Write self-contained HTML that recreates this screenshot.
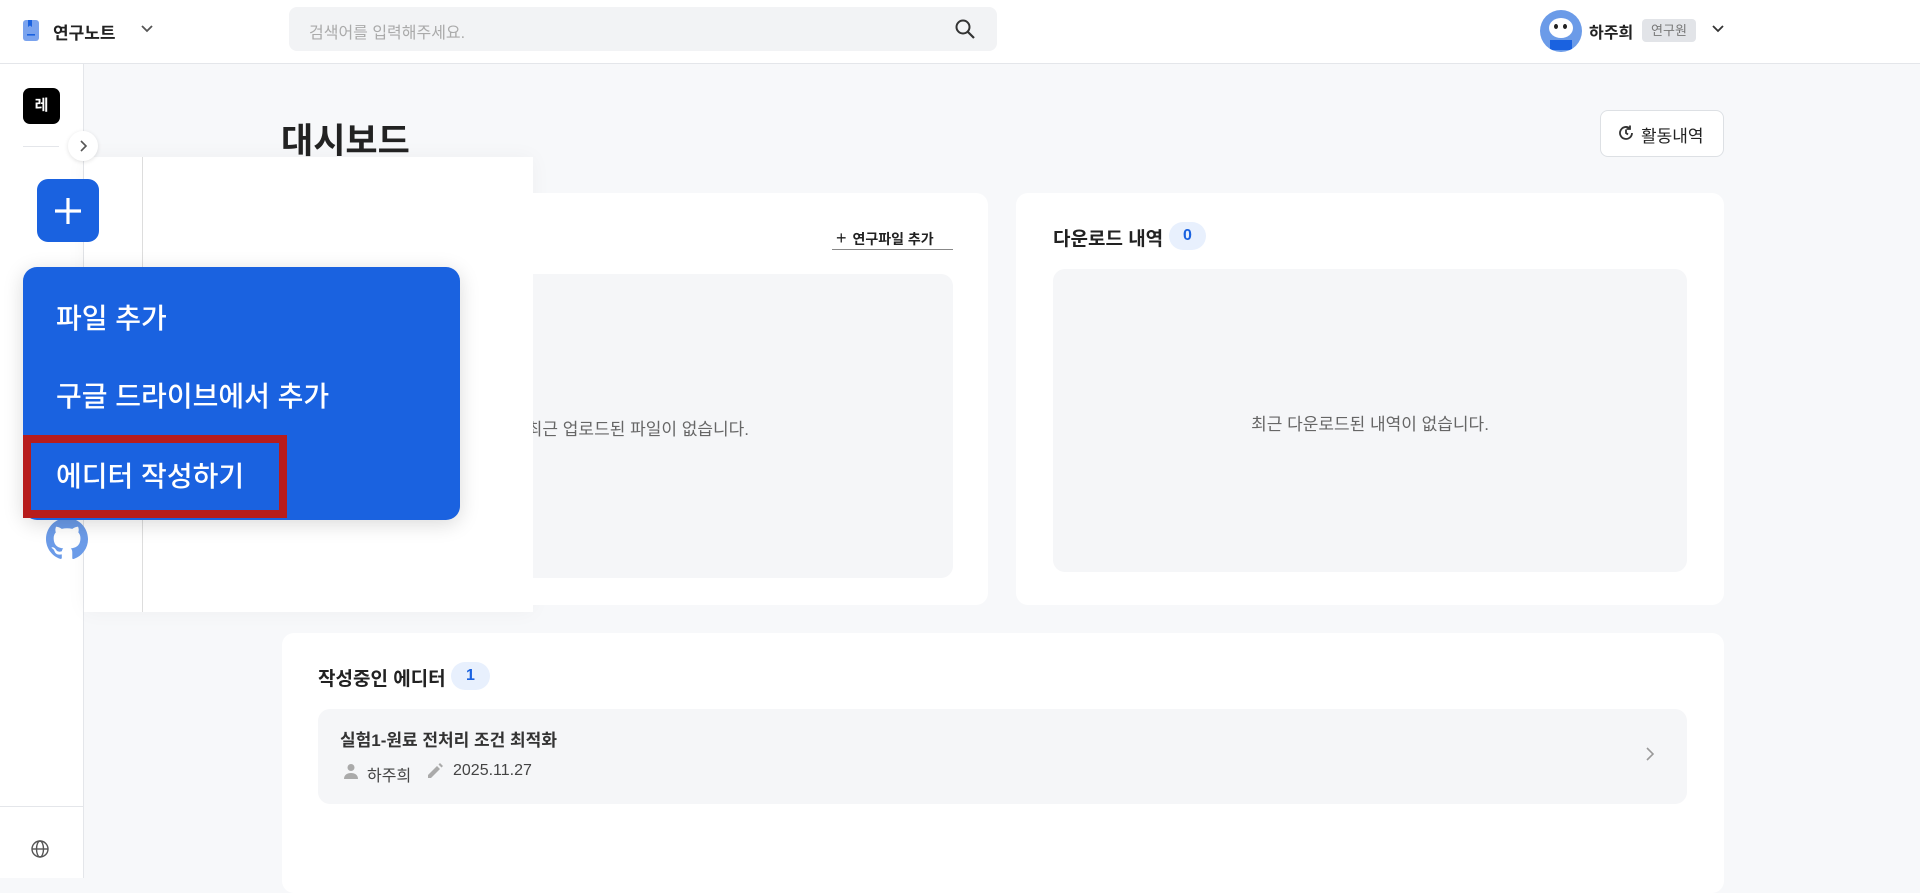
<!DOCTYPE html>
<html><head><meta charset="utf-8"><style>
*{box-sizing:border-box;margin:0;padding:0}
body{width:1920px;height:878px;overflow:hidden;background:#f7f8fa;font-family:"Liberation Sans","Noto Sans CJK KR",sans-serif;color:#222;position:relative}
.a{position:absolute}
.hdr{left:0;top:0;width:1920px;height:64px;background:#fff;border-bottom:1px solid #e4e6ea}
.side{left:0;top:64px;width:84px;height:814px;background:#fff;border-right:1px solid #e4e6ea}
.card{background:#fff;border-radius:12px}
.gray{background:#f5f6f8;border-radius:12px}
.badge{background:#e8f0fd;color:#1a62e0;border-radius:14px;font-weight:700;font-size:16px;text-align:center;height:28px;line-height:28px}
</style></head><body>
<div class="a hdr"></div>
<svg class="a" style="left:23px;top:20px" width="16" height="21" viewBox="0 0 16 21"><rect x="0" y="0" width="16" height="21" rx="3" fill="#7aa3ee"/><path d="M5 0v7l2-1.5L9 7V0z" fill="#1a62e0"/><rect x="4" y="14" width="8" height="1.6" fill="#1a62e0"/></svg>
<div class="a" style="left:53px;top:19px;font-size:17px;font-weight:700">연구노트</div>
<svg class="a" style="left:140px;top:24px" width="14" height="10" viewBox="0 0 14 10"><path d="M2 2l5 5 5-5" stroke="#555" stroke-width="1.8" fill="none"/></svg>
<div class="a" style="left:289px;top:7px;width:708px;height:44px;background:#f2f3f5;border-radius:8px"></div>
<div class="a" style="left:309px;top:19px;font-size:16px;color:#aaa">검색어를 입력해주세요.</div>
<svg class="a" style="left:954px;top:18px" width="22" height="22" viewBox="0 0 22 22"><circle cx="9" cy="9" r="6.5" stroke="#333" stroke-width="2" fill="none"/><path d="M14 14l6 6" stroke="#333" stroke-width="2.2"/></svg>
<div class="a" style="left:1540px;top:10px;width:42px;height:42px;border-radius:50%;background:#6b9be8;overflow:hidden"><div class="a" style="left:9px;top:8px;width:24px;height:20px;border-radius:50%;background:#fff"></div><div class="a" style="left:14px;top:14px;width:4px;height:5px;background:#222;border-radius:50%"></div><div class="a" style="left:23px;top:14px;width:4px;height:5px;background:#222;border-radius:50%"></div><div class="a" style="left:10px;top:30px;width:22px;height:10px;background:#1a62e0"></div></div>
<div class="a" style="left:1589px;top:19px;font-size:16px;font-weight:700">하주희</div>
<div class="a" style="left:1642px;top:19px;width:54px;height:23px;background:#e2e4e8;border-radius:4px;font-size:13px;color:#777;text-align:center;line-height:23px">연구원</div>
<svg class="a" style="left:1711px;top:24px" width="14" height="10" viewBox="0 0 14 10"><path d="M2 2l5 5 5-5" stroke="#333" stroke-width="1.8" fill="none"/></svg>
<div class="a side"></div>
<div class="a" style="left:23px;top:88px;width:37px;height:36px;background:#000;border-radius:7px;color:#fff;font-weight:700;font-size:15px;text-align:center;line-height:36px">레</div>
<div class="a" style="left:23px;top:146px;width:36px;height:1px;background:#e4e6ea"></div>
<div class="a" style="left:84px;top:157px;width:449px;height:455px;background:#fff;box-shadow:0 0 20px rgba(0,0,0,.04)"></div>
<div class="a" style="left:142px;top:157px;width:1px;height:455px;background:#ddd"></div>
<div class="a" style="left:68px;top:131px;width:30px;height:30px;border-radius:50%;background:#fff;box-shadow:0 1px 4px rgba(0,0,0,.12)"></div>
<svg class="a" style="left:78px;top:139px" width="10" height="14" viewBox="0 0 10 14"><path d="M3 2l5 5-5 5" stroke="#555" stroke-width="1.6" fill="none"/></svg>
<div class="a" style="left:37px;top:179px;width:62px;height:63px;background:#1a62e0;border-radius:11px"></div>
<svg class="a" style="left:52px;top:195px" width="32" height="32" viewBox="0 0 32 32"><path d="M16 3v26M3 16h26" stroke="#fff" stroke-width="3.2"/></svg>
<svg class="a" style="left:46px;top:518px" width="42" height="42" viewBox="0 0 16 16"><path fill="#6b9be8" d="M8 0C3.58 0 0 3.58 0 8c0 3.54 2.290 6.53 5.47 7.59.4.07.55-.17.55-.38v-1.34c-2.23.48-2.7-1.07-2.7-1.070-.36-.92-.89-1.17-.89-1.17-.73-.5.06-.49.06-.49.8.06 1.23.83 1.23.83.71 1.22 1.87.87 2.33.66.07-.52.28-.87.51-1.07-1.78-.2-3.64-.89-3.64-3.95 0-.87.31-1.59.82-2.15-.08-.2-.36-1.02.08-2.12 0 0 .67-.21 2.2.82a7.6 7.6 0 014 0c1.53-1.04 2.2-.82 2.2-.82.44 1.1.16 1.92.08 2.12.51.56.82 1.27.82 2.15 0 3.07-1.87 3.75-3.65 3.95.29.25.54.73.54 1.48v2.2c0 .21.15.46.55.38A8.01 8.01 0 0016 8c0-4.42-3.58-8-8-8z"/></svg>
<div class="a" style="left:0;top:806px;width:84px;height:1px;background:#e4e6ea"></div>
<svg class="a" style="left:30px;top:839px" width="20" height="20" viewBox="0 0 20 20" fill="none" stroke="#555" stroke-width="1.4"><circle cx="10" cy="10" r="8"/><ellipse cx="10" cy="10" rx="3.5" ry="8"/><path d="M2 10h16"/></svg>
<div class="a" style="left:23px;top:267px;width:437px;height:253px;background:#1a62e0;border-radius:14px;box-shadow:0 4px 20px rgba(0,0,0,.15)"></div>
<div class="a" style="left:56px;top:297px;font-size:28px;color:#fff;font-weight:500">파일 추가</div>
<div class="a" style="left:56px;top:375px;font-size:28px;color:#fff;font-weight:500">구글 드라이브에서 추가</div>
<div class="a" style="left:23px;top:435px;width:264px;height:83px;border:8px solid #b71c1c"></div>
<div class="a" style="left:56px;top:455px;font-size:28px;color:#fff;font-weight:500">에디터 작성하기</div>
<div class="a" style="left:281px;top:113px;font-size:35px;font-weight:700">대시보드</div>
<div class="a" style="left:1600px;top:110px;width:124px;height:47px;background:#fff;border:1px solid #dde0e4;border-radius:8px"></div>
<svg class="a" style="left:1617px;top:124px" width="18" height="18" viewBox="0 0 18 18" fill="none" stroke="#333" stroke-width="1.8"><path d="M15 9a6 6 0 1 1-2-4.5"/><path d="M13 1.5v3.5h-3.5"/><path d="M9 5.5V9l2 1.5"/></svg>
<div class="a" style="left:1641px;top:122px;font-size:17px">활동내역</div>
<div class="a card" style="left:533px;top:193px;width:455px;height:412px;border-radius:0 12px 12px 0"></div>
<div class="a" style="left:836px;top:228px;font-size:14px;font-weight:700"><span style="font-size:18px;font-weight:400;margin-right:6px">+</span>연구파일 추가</div>
<div class="a" style="left:832px;top:249px;width:121px;height:1px;background:#888"></div>
<div class="a gray" style="left:533px;top:274px;width:420px;height:304px;border-radius:0 12px 12px 0;overflow:hidden"><div class="a" style="right:204px;top:141px;font-size:17px;color:#666;white-space:nowrap">최근 업로드된 파일이 없습니다.</div></div>
<div class="a card" style="left:1016px;top:193px;width:708px;height:412px"></div>
<div class="a" style="left:1053px;top:224px;font-size:19px;font-weight:700">다운로드 내역</div>
<div class="a badge" style="left:1169px;top:222px;width:37px">0</div>
<div class="a gray" style="left:1053px;top:269px;width:634px;height:303px"></div>
<div class="a" style="left:1053px;top:410px;width:634px;text-align:center;font-size:17px;color:#666">최근 다운로드된 내역이 없습니다.</div>
<div class="a card" style="left:282px;top:633px;width:1442px;height:260px"></div>
<div class="a" style="left:318px;top:664px;font-size:19px;font-weight:700">작성중인 에디터</div>
<div class="a badge" style="left:451px;top:662px;width:39px">1</div>
<div class="a gray" style="left:318px;top:709px;width:1369px;height:95px"></div>
<div class="a" style="left:340px;top:726px;font-size:17px;font-weight:700;color:#333">실험1-원료 전처리 조건 최적화</div>
<svg class="a" style="left:343px;top:763px" width="16" height="16" viewBox="0 0 16 16" fill="#aaa"><circle cx="8" cy="4.5" r="3.5"/><path d="M1 16c0-4 3-6 7-6s7 2 7 6z"/></svg>
<div class="a" style="left:367px;top:762px;font-size:16px;color:#444">하주희</div>
<svg class="a" style="left:427px;top:762px" width="17" height="17" viewBox="0 0 17 17" fill="#aaa"><path d="M1 13v3h3l9-9-3-3zM11.5 2.5l3 3 1.5-1.5-3-3z"/></svg>
<div class="a" style="left:453px;top:762px;font-size:16px;color:#444">2025.11.27</div>
<svg class="a" style="left:1645px;top:746px" width="10" height="16" viewBox="0 0 10 16"><path d="M2 2l6 6-6 6" stroke="#999" stroke-width="1.6" fill="none"/></svg>
</body></html>
